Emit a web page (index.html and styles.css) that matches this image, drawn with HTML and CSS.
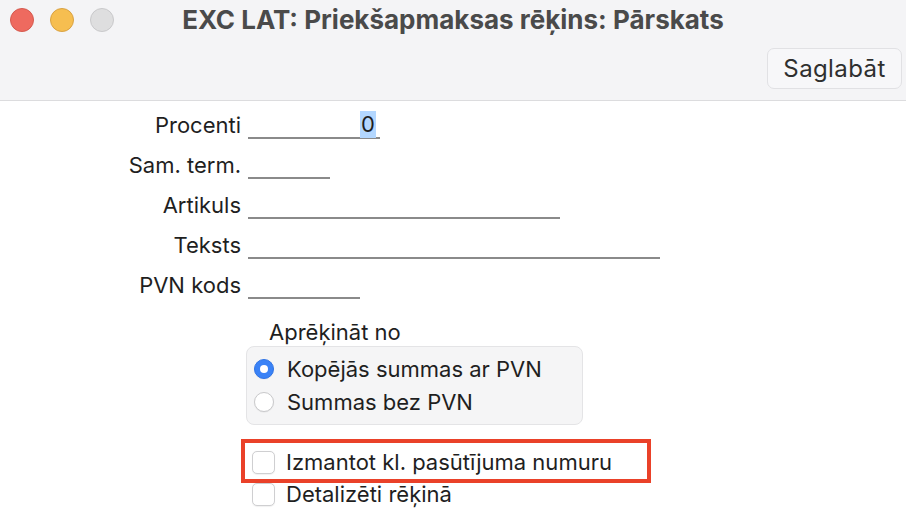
FILE: index.html
```html
<!DOCTYPE html>
<html lang="lv">
<head>
<meta charset="utf-8">
<title>EXC LAT: Priekšapmaksas rēķins: Pārskats</title>
<link rel="stylesheet" href="styles.css">
</head>
<body>
<div class="window">
  <header class="titlebar">
    <div class="title-row">
      <div class="lights">
        <span class="light red"></span>
        <span class="light yellow"></span>
        <span class="light grey"></span>
      </div>
      <div class="title">EXC LAT: Priekšapmaksas rēķins: Pārskats</div>
      <div></div>
    </div>
    <div class="toolbar">
      <button class="btn">Saglabāt</button>
    </div>
  </header>
  <main class="content">
    <div class="form">
      <div class="row">
        <label class="lbl">Procenti</label>
        <div class="field w-procenti"><span class="sel">0</span></div>
      </div>
      <div class="row">
        <label class="lbl">Sam. term.</label>
        <div class="field w-sam"></div>
      </div>
      <div class="row">
        <label class="lbl">Artikuls</label>
        <div class="field w-art"></div>
      </div>
      <div class="row">
        <label class="lbl">Teksts</label>
        <div class="field w-teksts"></div>
      </div>
      <div class="row">
        <label class="lbl">PVN kods</label>
        <div class="field w-pvn"></div>
      </div>
    </div>
    <div class="calc">
      <div class="calc-title">Aprēķināt no</div>
      <div class="group">
        <div class="opt"><span class="radio on"></span><span>Kopējās summas ar PVN</span></div>
        <div class="opt"><span class="radio"></span><span>Summas bez PVN</span></div>
      </div>
      <div class="checks">
        <div class="opt marked"><span class="check"></span><span>Izmantot kl. pasūtījuma numuru</span></div>
        <div class="opt"><span class="check"></span><span>Detalizēti rēķinā</span></div>
      </div>
    </div>
  </main>
</div>
</body>
</html>
```
FILE: styles.css
```css
*, *::before, *::after { box-sizing: border-box; }
html, body { margin: 0; padding: 0; }
body {
  width: 906px;
  height: 516px;
  overflow: hidden;
  background: #ffffff;
  font-family: Inter, "Liberation Sans", sans-serif;
  color: #1f1f1f;
}
.window { display: flex; flex-direction: column; height: 516px; }
.titlebar {
  height: 101px;
  background: #f4f4f6;
  border-bottom: 1px solid #dcdcde;
  display: flex;
  flex-direction: column;
}
.title-row {
  height: 40px;
  display: grid;
  grid-template-columns: 1fr auto 1fr;
  align-items: center;
}
.lights { display: flex; gap: 16px; padding-left: 10px; }
.light { width: 24px; height: 24px; border-radius: 50%; border: 1px solid; }
.light.red { background: #ee6a5f; border-color: #d55a4f; }
.light.yellow { background: #f6be50; border-color: #d9a243; }
.light.grey { background: #dededf; border-color: #c9c9cb; }
.title {
  font-weight: 700;
  font-size: 26px;
  color: #4a4a4a;
  line-height: 32px;
}
.toolbar {
  display: flex;
  justify-content: flex-end;
  padding: 8px 4px 0 0;
}
.btn {
  width: 135px;
  height: 41px;
  padding: 0;
  font-family: Inter, "Liberation Sans", sans-serif;
  font-size: 24px;
  letter-spacing: 0.4px;
  color: #2f2f2f;
  background: #f7f7f9;
  border: 1px solid #e1e1e4;
  border-radius: 7px;
}
.content { flex: 1; display: flex; flex-direction: column; padding-top: 10px; }
.form { display: flex; flex-direction: column; gap: 12px; }
.row { display: flex; height: 28px; }
.lbl {
  width: 241px;
  text-align: right;
  font-size: 22px;
  line-height: 28px;
}
.field {
  margin-left: 7px;
  height: 28px;
  border-bottom: 2px solid #8a8a8a;
  display: flex;
  justify-content: flex-end;
  align-items: flex-end;
}
.w-procenti { width: 132px; padding-right: 4px; }
.w-sam { width: 82px; }
.w-art { width: 312px; }
.w-teksts { width: 412px; }
.w-pvn { width: 112px; }
.sel {
  background: #b3d7ff;
  font-size: 22px;
  line-height: 27px;
  padding: 0 1px;
  margin-bottom: -1px;
}
.calc { margin-left: 246px; display: flex; flex-direction: column; margin-top: 19px; }
.calc-title { padding-left: 23px; font-size: 22px; line-height: 28px; }
.group {
  width: 337px;
  height: 79px;
  background: #f5f5f6;
  border: 1px solid #e4e4e6;
  border-radius: 8px;
  padding: 8px 0 0 7px;
  display: flex;
  flex-direction: column;
  gap: 5px;
}
.opt {
  display: flex;
  align-items: center;
  height: 28px;
  font-size: 22px;
  line-height: 28px;
  gap: 13px;
  position: relative;
}
.radio {
  width: 20px;
  height: 20px;
  border-radius: 50%;
  background: #ffffff;
  border: 1px solid #c9c9cb;
  box-shadow: 0 0.5px 1px rgba(0,0,0,0.08);
  flex: none;
  display: flex;
  align-items: center;
  justify-content: center;
}
.radio.on { background: #3a82f6; border-color: #2f74e6; }
.radio.on::after {
  content: "";
  width: 8px;
  height: 8px;
  border-radius: 50%;
  background: #ffffff;
}
.checks { margin-top: 23px; display: flex; flex-direction: column; gap: 4px; padding-left: 7px; }
.checks .opt { gap: 11px; }
.check {
  width: 23px;
  height: 23px;
  border-radius: 5px;
  background: #ffffff;
  border: 1px solid #cfcfd1;
  box-shadow: 0 0.5px 1px rgba(0,0,0,0.06);
  flex: none;
  margin-left: -1px;
}
.marked::after {
  content: "";
  position: absolute;
  left: -12px;
  top: -9px;
  width: 410px;
  height: 44px;
  border: 4px solid #ea4129;
  pointer-events: none;
}
```
